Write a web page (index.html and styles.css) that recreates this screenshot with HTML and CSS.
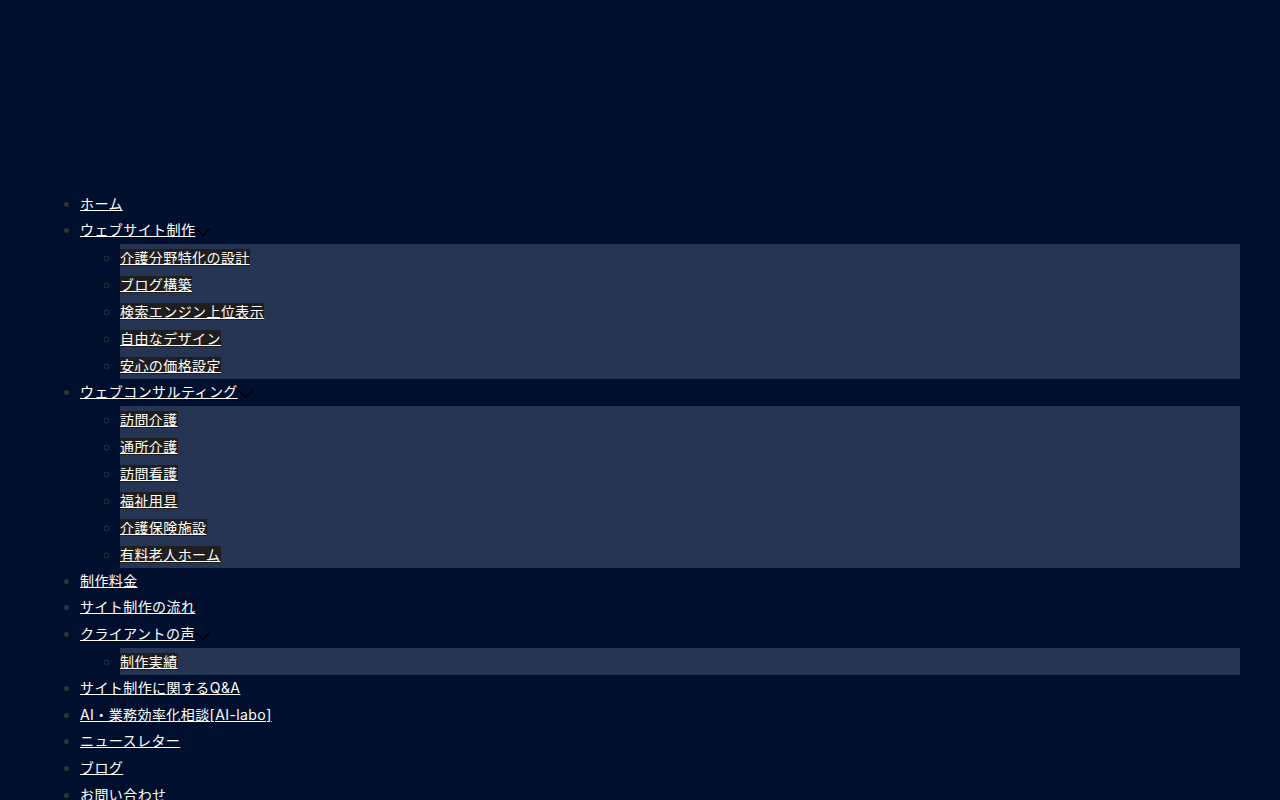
FILE: index.html
```html
<!DOCTYPE html>
<html lang="ja">

<head>
    <meta charset="UTF-8" />
    <title>介護事業所のウェブサイト制作</title>
    <link rel="stylesheet" href="styles.css">
</head>

<body>
    <header class="site-header"></header>

    <nav class="global-nav">
        <ul class="menu">
            <li><a href="#">ホーム</a></li>
            <li>
                <a href="#">ウェブサイト制作</a><span class="chevron"><svg width="16" height="10" viewBox="0 0 16 10"><path d="M1 1.5l7 7 7-7" fill="none" stroke="currentColor" stroke-width="1.5"/></svg></span>
                <ul class="sub-menu">
                    <li><a href="#">介護分野特化の設計</a></li>
                    <li><a href="#">ブログ構築</a></li>
                    <li><a href="#">検索エンジン上位表示</a></li>
                    <li><a href="#">自由なデザイン</a></li>
                    <li><a href="#">安心の価格設定</a></li>
                </ul>
            </li>
            <li>
                <a href="#">ウェブコンサルティング</a><span class="chevron"><svg width="16" height="10" viewBox="0 0 16 10"><path d="M1 1.5l7 7 7-7" fill="none" stroke="currentColor" stroke-width="1.5"/></svg></span>
                <ul class="sub-menu">
                    <li><a href="#">訪問介護</a></li>
                    <li><a href="#">通所介護</a></li>
                    <li><a href="#">訪問看護</a></li>
                    <li><a href="#">福祉用具</a></li>
                    <li><a href="#">介護保険施設</a></li>
                    <li><a href="#">有料老人ホーム</a></li>
                </ul>
            </li>
            <li><a href="#">制作料金</a></li>
            <li><a href="#">サイト制作の流れ</a></li>
            <li>
                <a href="#">クライアントの声</a><span class="chevron"><svg width="16" height="10" viewBox="0 0 16 10"><path d="M1 1.5l7 7 7-7" fill="none" stroke="currentColor" stroke-width="1.5"/></svg></span>
                <ul class="sub-menu">
                    <li><a href="#">制作実績</a></li>
                </ul>
            </li>
            <li><a href="#">サイト制作に関するQ&amp;A</a></li>
            <li><a href="#">AI・業務効率化相談[AI-labo]</a></li>
            <li><a href="#">ニュースレター</a></li>
            <li><a href="#">ブログ</a></li>
            <li><a href="#">お問い合わせ</a></li>
        </ul>
    </nav>
</body>

</html>
```

FILE: styles.css
```css
/* 全体 */
body {
    margin: 0;
    padding: 0 40px;
    background: #000f2e;
    color: #333;
    font-family: Inter, "Noto Sans CJK JP", sans-serif;
    font-size: 14px;
    letter-spacing: 0.03em;
    line-height: 26.7px;
}

.site-header {
    height: 190.6px;
}

/* グローバルナビ */
.menu {
    margin: 0;
    padding-left: 40px;
    list-style: disc;
}

.menu a {
    color: #fff;
    text-decoration: underline;
}

.chevron {
    display: inline-block;
    width: 16px;
    height: 10px;
    color: #000;
    vertical-align: -2px;
}

.chevron svg {
    display: block;
}

.sub-menu {
    margin: 0 0 0 40px;
    padding: 0;
    list-style: circle;
    background: #243452;
    line-height: 27px;
}

.sub-menu a {
    background: #1e1e1e;
}
```
